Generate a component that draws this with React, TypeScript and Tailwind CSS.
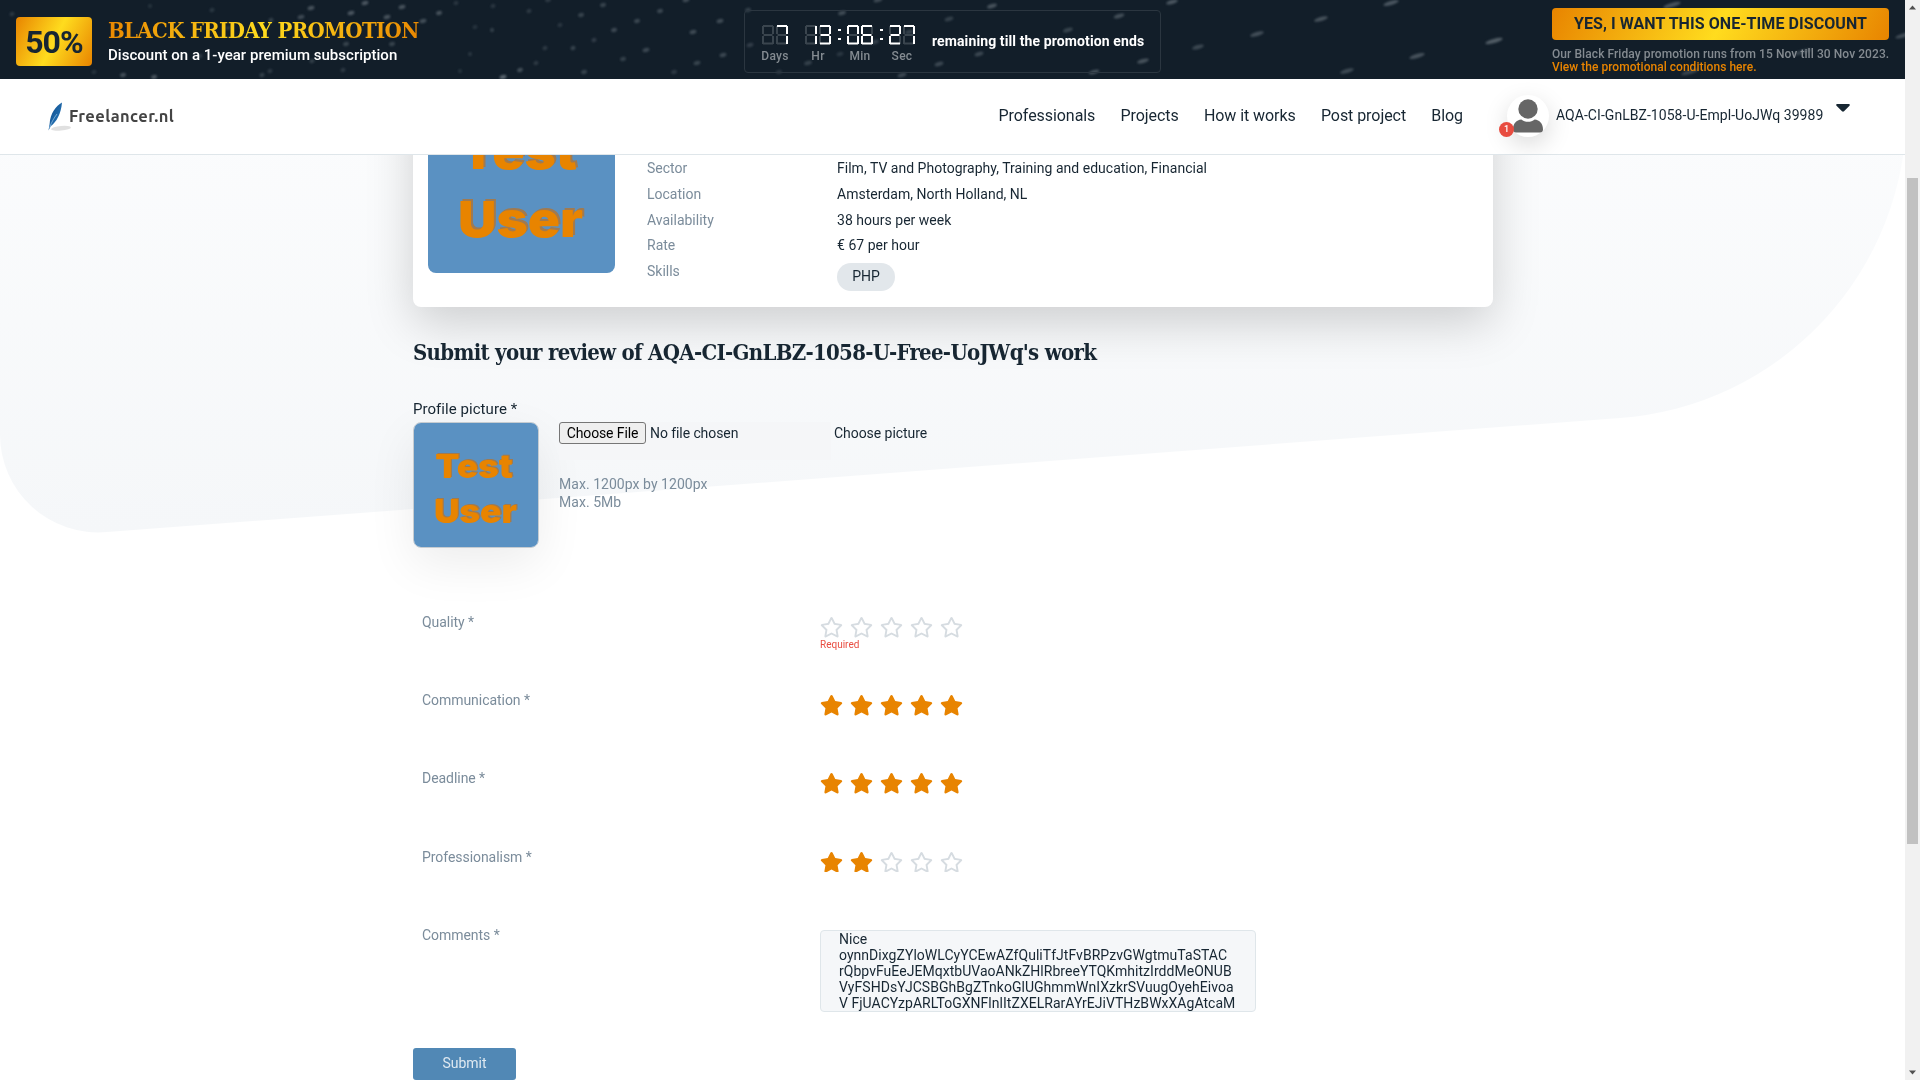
import { FaRegStar, FaStar } from "react-icons/fa";

const gold = "bg-[linear-gradient(117deg,#e88400_0%,#ffdc1e_50%,#e88400_100%)]";
const slab = "font-['Roboto_Slab','DejaVu_Serif_Condensed','DejaVu_Serif',serif]";

/* Streaks of the star field: x, y, length, opacity */
const streaks: [number, number, number, number][] = [
  [311, 8, 7, 0.3], [365, 3, 7, 0.32], [402, 7, 7, 0.3], [301, 17, 7, 0.25], [351, 13, 7, 0.32], [387, 17, 7, 0.3], [439, 13, 6, 0.3],
  [423, 21, 7, 0.28], [346, 44, 6, 0.22], [392, 44, 6, 0.22], [271, 20, 5, 0.2], [228, 28, 5, 0.14], [212, 10, 5, 0.15], [150, 6, 4, 0.12],
  [200, 56, 5, 0.16], [262, 75, 5, 0.2], [270, 71, 5, 0.16], [123, 75, 6, 0.28], [154, 77, 6, 0.3], [94, 72, 5, 0.12], [12, 14, 5, 0.15], [54, 60, 4, 0.12], [33, 44, 4, 0.1],
  [312, 61, 5, 0.2], [343, 70, 5, 0.16], [456, 3, 5, 0.14], [475, 27, 5, 0.12], [492, 30, 4, 0.2], [470, 54, 4, 0.14], [460, 71, 4, 0.12],
  [493, 6, 5, 0.14], [529, 11, 5, 0.16], [548, 0, 6, 0.16], [560, 25, 5, 0.14], [581, 15, 6, 0.22], [603, 5, 6, 0.22], [545, 48, 5, 0.16],
  [573, 48, 5, 0.22], [594, 40, 5, 0.18], [614, 30, 6, 0.25], [637, 21, 6, 0.24], [660, 11, 6, 0.24], [686, 0, 7, 0.25], [536, 63, 5, 0.16],
  [520, 70, 6, 0.28], [503, 77, 7, 0.4], [584, 72, 6, 0.22], [646, 50, 7, 0.24], [623, 59, 6, 0.2], [693, 32, 7, 0.26], [720, 21, 7, 0.26],
  [697, 63, 7, 0.22], [723, 55, 7, 0.24], [674, 72, 6, 0.16], [750, 45, 7, 0.18], [748, 10, 6, 0.2], [842, 13, 8, 0.26], [878, 0, 9, 0.25],
  [779, 72, 6, 0.14], [808, 63, 8, 0.2], [840, 54, 7, 0.14], [875, 42, 8, 0.18], [909, 32, 8, 0.2], [949, 19, 9, 0.2], [992, 6, 10, 0.3],
  [902, 75, 9, 0.24], [939, 64, 9, 0.24], [979, 54, 9, 0.24], [1068, 30, 10, 0.22], [1119, 16, 11, 0.28], [1172, 2, 12, 0.32],
  [1094, 72, 11, 0.28], [1143, 61, 12, 0.3], [1198, 47, 12, 0.24], [1257, 34, 14, 0.28], [1321, 19, 14, 0.3], [1391, 3, 16, 0.32],
  [1347, 71, 14, 0.26], [1417, 56, 16, 0.3], [1494, 41, 18, 0.36], [1672, 5, 18, 0.3], [1690, 72, 18, 0.22], [1802, 52, 20, 0.2], [1905, 35, 20, 0.26],
];

function StarField() {
  return (
    <svg className="absolute inset-0 h-full w-full" viewBox="0 0 1905 79" preserveAspectRatio="none" aria-hidden="true">
      <defs>
        <filter id="soft" x="-5%" y="-20%" width="110%" height="140%">
          <feGaussianBlur stdDeviation="1" />
        </filter>
      </defs>
      <g filter="url(#soft)">
        {streaks.map(([x, y, len, o], i) => (
          <ellipse key={i} cx={x} cy={y} rx={len / 2} ry={2.1} fill="#c9d2da" opacity={o * 0.95} transform={`rotate(-16 ${x} ${y})`} />
        ))}
      </g>
    </svg>
  );
}

/* Lit segments per digit, in the order a b c d e f g */
const lit: Record<string, string> = {
  "0": "abcdef",
  "1": "bc",
  "2": "abged",
  "3": "abgcd",
  "6": "afgecd",
  "7": "abc",
  " ": "",
};
const segments = [
  { id: "a", x: 1, y: 0, w: 10, h: 2 },
  { id: "b", x: 10, y: 1, w: 2, h: 8 },
  { id: "c", x: 10, y: 11, w: 2, h: 8 },
  { id: "d", x: 1, y: 17.5, w: 10, h: 2 },
  { id: "e", x: 0, y: 11, w: 2, h: 8 },
  { id: "f", x: 0, y: 1, w: 2, h: 8 },
  { id: "g", x: 1.5, y: 9, w: 9, h: 2 },
];

function Digit({ value }: { value: string }) {
  return (
    <svg width="12" height="20" viewBox="0 0 12 20" aria-label={value}>
      {[...segments]
        .sort((p, q) => Number(lit[value].includes(p.id)) - Number(lit[value].includes(q.id)))
        .map((s) => (
          <rect key={s.id} x={s.x} y={s.y} width={s.w} height={s.h} fill={lit[value].includes(s.id) ? "#fff" : "#3a454e"} />
        ))}
    </svg>
  );
}

function Unit({ digits, label }: { digits: string; label: string }) {
  return (
    <div className="flex w-[26px] flex-col items-center">
      <div className="flex gap-[2px]">
        <Digit value={digits[0]} />
        <Digit value={digits[1]} />
      </div>
      <span className="mt-[3px] text-[12px] leading-[16px] font-medium tracking-[0.3px] text-[#848b91]">{label}</span>
    </div>
  );
}

function Colon() {
  return (
    <div className="flex w-4 flex-col items-center gap-[7px] pt-[4px]">
      <span className="h-[2px] w-[3px] bg-white" />
      <span className="h-[2px] w-[3px] bg-white" />
    </div>
  );
}

function Banner() {
  return (
    <div className="relative h-[79px] bg-[#121e29]">
      <StarField />
      <div className="relative flex h-full items-start">
        <div className={`mt-[17px] ml-4 flex h-[49px] w-[76px] items-center justify-center rounded text-[32px] font-bold text-[#172632] ${gold}`}>
          <span className="tracking-[-0.9px]">50%</span>
        </div>
        <div className="ml-4 w-[620px] pt-[15px]">
          <div className={`w-fit bg-clip-text text-[22px] leading-[30px] font-bold whitespace-nowrap text-transparent tracking-[-0.66px] ${slab} ${gold}`}>
            BLACK FRIDAY PROMOTION
          </div>
          <div className="mt-px text-[15px] leading-[18px] font-medium whitespace-nowrap text-white tracking-[0.02px]">Discount on a 1-year premium subscription</div>
        </div>
        <div className="mt-[10px] ml-4 flex h-[63px] w-[417px] rounded border border-[#2b3640] pt-[14px] pl-[17px]">
          <Unit digits=" 7" label="Days" />
          <div className="w-[17px]" />
          <Unit digits="13" label="Hr" />
          <Colon />
          <Unit digits="06" label="Min" />
          <Colon />
          <Unit digits="27" label="Sec" />
          <div className="ml-[17px] pt-[6px] text-[14px] leading-5 font-bold whitespace-nowrap text-white tracking-[0.11px]">remaining till the promotion ends</div>
        </div>
        <div className="mt-2 mr-4 ml-auto w-[337px]">
          <button className={`flex h-8 w-full items-center justify-center rounded text-[16px] font-bold whitespace-nowrap text-[#172632] tracking-[0.07px] ${gold}`}>
            YES, I WANT THIS ONE-TIME DISCOUNT
          </button>
          <div className="mt-[8px] text-[12px] leading-[13px] font-medium whitespace-nowrap">
            <p className="tracking-[0.075px] text-[#848b91]">Our Black Friday promotion runs from 15 Nov till 30 Nov 2023.</p>
            <p className="tracking-[0.03px] text-[#e88400]">View the promotional conditions here.</p>
          </div>
        </div>
      </div>
    </div>
  );
}

function Logo() {
  return (
    <div className="ml-12 flex items-center">
      <svg className="mt-[2px]" width="24" height="30" viewBox="0 0 24 30" aria-hidden="true">
        <defs>
          <linearGradient id="feather" x1="0" y1="0" x2="1" y2="1">
            <stop offset="0" stopColor="#0b4684" />
            <stop offset="1" stopColor="#2f84c8" />
          </linearGradient>
        </defs>
        <ellipse cx="13" cy="26.3" rx="10" ry="2.3" fill="#000" opacity=".12" transform="rotate(-5 13 26)" />
        <path d="M14 .5C8 4 2.300 11 1.600 22L.5 28.500l2.200-4.300C8.500 20 13 12 14 .5Z" fill="url(#feather)" />
        <path d="M9 12C6 16 3.500 20 1.500 26" fill="none" stroke="#9cc8ea" strokeWidth=".7" />
      </svg>
      <span className="mt-px -ml-[3px] font-['Ubuntu','Noto_Sans',sans-serif] text-[16.500px] font-bold tracking-[0.38px] text-[#444]">Freelancer.nl</span>
    </div>
  );
}

function Nav() {
  return (
    <header className="relative flex h-[76px] items-center border-b border-[#dfe6ea] bg-white pb-px">
      <Logo />
      <nav className="ml-auto flex gap-[25.2px] text-[16px] whitespace-nowrap text-[#172632] tracking-[-0.06px]">
        {["Professionals", "Projects", "How it works", "Post project", "Blog"].map((l) => (
          <a key={l}>{l}</a>
        ))}
      </nav>
      <div className="ml-[44px] flex w-[398px] items-center">
        <div className="relative flex size-[42px] items-center justify-center rounded-full bg-white shadow-[0_8px_24px_rgba(0,0,0,0.15)]">
          <svg width="30" height="34" viewBox="0 0 30 34" fill="#666" aria-hidden="true">
            <circle cx="15" cy="10" r="9.700" />
            <path d="M0 30.500c0-6 3.500-9.500 8.300-10 2 1.600 4.200 2.300 6.700 2.300s4.700-.7 6.700-2.300c4.800.5 8.300 4 8.300 10 0 1.700-1.300 3-3 3H3c-1.700 0-3-1.300-3-3Z" />
          </svg>
          <span className="absolute top-[27px] -left-[8px] flex size-[15px] items-center justify-center rounded-full bg-[#e84c40] text-[9px] font-medium text-white">1</span>
        </div>
        <span className="mb-px ml-[7px] text-[14px] whitespace-nowrap text-[#172632] tracking-[0.045px]">AQA-CI-GnLBZ-1058-U-Empl-UoJWq 39989</span>
        <svg className="mb-[17px] ml-[13px]" width="14" height="8" viewBox="0 0 14 8" fill="#172632" aria-hidden="true">
          <path d="M1.300 0h11.400c1 0 1.400 1 .8 1.700L8 7.200c-.6.600-1.400.6-2 0L.5 1.700C-.1 1 .300 0 1.300 0Z" />
        </svg>
      </div>
    </header>
  );
}

function TestPicture({ className }: { className: string }) {
  return (
    <svg className={className} viewBox="0 0 187 187" role="img">
      <rect width="187" height="187" fill="#5a91c2" />
      <g fontFamily="Inter, sans-serif" fontWeight="900" fontSize="49.5">
        <g fill="#a07a50" transform="translate(2 -2)">
          <text x="32" y="83" textLength="117" lengthAdjust="spacingAndGlyphs">Test</text>
          <text x="30" y="151" textLength="125" lengthAdjust="spacingAndGlyphs">User</text>
        </g>
        <g fill="#e88400">
          <text x="32" y="83" textLength="117" lengthAdjust="spacingAndGlyphs">Test</text>
          <text x="30" y="151" textLength="125" lengthAdjust="spacingAndGlyphs">User</text>
        </g>
      </g>
    </svg>
  );
}

const details = [
  ["Sector", "Film, TV and Photography, Training and education, Financial"],
  ["Location", "Amsterdam, North Holland, NL"],
  ["Availability", "38 hours per week"],
  ["Rate", "€ 67 per hour"],
];

function ProfileCard() {
  return (
    <section className="-mt-[84px] flex h-[236px] w-[1080px] rounded-lg bg-white p-[15px] shadow-[0_16px_48px_rgba(0,0,0,0.175)]">
      <TestPicture className="size-[187px] rounded-lg" />
      <dl className="ml-8 grid h-fit grid-cols-[190px_1fr] pt-[70px] text-[14px] leading-[25.800px] whitespace-nowrap">
        {details.map(([k, v]) => (
          <div key={k} className="contents">
            <dt className="text-[#7b8c9b]">{k}</dt>
            <dd className="text-[#172632] tracking-[0.02px]">{v}</dd>
          </div>
        ))}
        <dt className="text-[#7b8c9b]">Skills</dt>
        <dd className="mt-[4px] flex h-7 w-[58px] items-center justify-center rounded-full bg-[#e2e7eb] text-[#172632]">PHP</dd>
      </dl>
    </section>
  );
}

function Stars({ value }: { value: number }) {
  return (
    <div className="-ml-[0.3px] flex gap-[7px]">
      {[1, 2, 3, 4, 5].map((n) =>
        n <= value ? (
          <FaStar key={n} className="h-[20.500px] w-[23px] text-[#e88400]" />
        ) : (
          <FaRegStar key={n} className="h-[20.500px] w-[23px] text-[#d6dce1]" />
        ),
      )}
    </div>
  );
}

const ratings = [
  { label: "Quality *", value: 0, required: true },
  { label: "Communication *", value: 5 },
  { label: "Deadline *", value: 5 },
  { label: "Professionalism *", value: 2 },
];

const comment = [
  "Nice",
  "oynnDixgZYloWLCyYCEwAZfQuliTfJtFvBRPzvGWgtmuTaSTAC",
  "rQbpvFuEeJEMqxtbUVaoANkZHlRbreeYTQKmhitzIrddMeONUB",
  "VyFSHDsYJCSBGhBgZTnkoGlUGhmmWnIXzkrSVuugOyehEivoa",
  "V FjUACYzpARLToGXNFlnlItZXELRarAYrEJiVTHzBWxXAgAtcaM",
];

function ReviewForm() {
  return (
    <form className="w-[1080px]">
      <h1 className={`mt-[29px] text-[22px] leading-8 font-bold whitespace-nowrap text-[#172632] tracking-[-0.705px] ${slab}`}>
        Submit your review of AQA-CI-GnLBZ-1058-U-Free-UoJWq's work
      </h1>
      <div className="mt-[31px] text-[15px] leading-5 text-[#172632] tracking-[0.05px]">Profile picture *</div>
      <div className="mt-[3px] flex h-[190px] items-start">
        <TestPicture className="size-[126px] rounded-lg border border-[#c6ccd1] shadow-[0_16px_48px_rgba(0,0,0,0.075)]" />
        <div className="ml-5 text-[14px]">
          <div className="flex">
            <div className="flex h-[38px] w-[272px] items-start bg-[#f5f6f8]">
              <button type="button" className="h-[22px] w-[87px] rounded-[3px] border border-[#767676] bg-[#efefef] leading-5 tracking-[-0.12px] whitespace-nowrap text-black">
                Choose File
              </button>
              <span className="ml-1 leading-[22px] text-[#172632] tracking-[-0.08px]">No file chosen</span>
            </div>
            <span className="ml-[3px] leading-[22px] text-[#172632] tracking-[-0.05px]">Choose picture</span>
          </div>
          <p className="mt-[15px] leading-[18px] text-[#7b8c9b] tracking-[0.04px]">
            Max. 1200px by 1200px
            <br />
            Max. 5Mb
          </p>
        </div>
      </div>
      {ratings.map((r) => (
        <div key={r.label} className="flex h-[78.200px] pl-[9px] text-[14px]">
          <div className="w-[398px] leading-5 text-[#7b8c9b] tracking-[-0.05px]">{r.label}</div>
          <div className="pt-[5px]">
            <Stars value={r.value} />
            {r.required && <p className="text-[10px] leading-[13px] text-[#e84c40]">Required</p>}
          </div>
        </div>
      ))}
      <div className="flex h-[123px] pl-[9px] text-[14px]">
        <div className="w-[398px] leading-5 text-[#7b8c9b] tracking-[-0.05px]">Comments *</div>
        <div className="mt-[5px] h-[82px] w-[436px] overflow-hidden rounded border border-[#dfe6ea] bg-[#f5f7f9] pl-[18px] leading-4 tracking-[0.035px] whitespace-nowrap text-[#172632]">
          {comment.map((l) => (
            <div key={l}>{l}</div>
          ))}
        </div>
      </div>
      <button type="button" className="flex h-8 w-[103px] items-center justify-center rounded-[3px] bg-[#5188b5] pb-px text-[14px] text-[#dfe9f1]">
        Submit
      </button>
    </form>
  );
}

function Scrollbar() {
  return (
    <div className="flex h-full w-[15px] flex-col items-center bg-[#f1f1f1]">
      <svg className="mt-[5px]" width="7" height="5" viewBox="0 0 7 5" fill="#505050">
        <path d="M0 4.500 3.500.500 7 4.500Z" />
      </svg>
      <div className="mt-[168px] h-[666px] w-[11px] bg-[#c1c1c1]" />
      <svg className="mt-auto mb-[5px]" width="7" height="5" viewBox="0 0 7 5" fill="#505050">
        <path d="M0 .500 3.500 4.500 7 .500Z" />
      </svg>
    </div>
  );
}

export default function App() {
  return (
    <div className="flex h-[1080px] w-[1920px] overflow-hidden bg-white font-['Roboto',sans-serif]">
      <div className="flex h-full w-[1905px] flex-col">
        <Banner />
        <Nav />
        <main className="relative flex-1 overflow-hidden">
          <svg className="absolute top-0 left-0" width="1905" height="400" viewBox="0 155 1905 400" aria-hidden="true">
            <defs>
              <linearGradient id="hero" x1="0" y1="0" x2="0" y2="1">
                <stop offset="0" stopColor="#fbfcfd" />
                <stop offset="1" stopColor="#f5f7f9" />
              </linearGradient>
            </defs>
            <path d="M0 110H1906.500A309 309 0 0 1 1620 418L107 532A98 98 0 0 1 0 434Z" fill="url(#hero)" />
          </svg>
          <div className="relative ml-[413px]">
            <ProfileCard />
            <ReviewForm />
          </div>
        </main>
      </div>
      <Scrollbar />
    </div>
  );
}
